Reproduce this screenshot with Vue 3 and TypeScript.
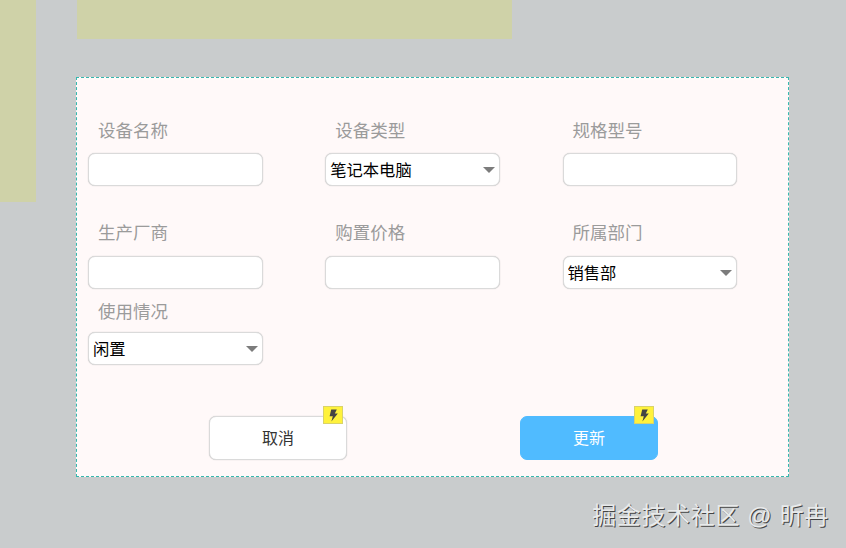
<script setup lang="ts">
import { reactive } from 'vue'

interface Field {
  key: string
  label: string
  options?: string[]
}

const fields: Field[] = [
  { key: 'name', label: '设备名称' },
  { key: 'type', label: '设备类型', options: ['笔记本电脑', '台式电脑', '平板电脑'] },
  { key: 'model', label: '规格型号' },
  { key: 'maker', label: '生产厂商' },
  { key: 'price', label: '购置价格' },
  { key: 'dept', label: '所属部门', options: ['销售部', '技术部', '财务部'] },
  { key: 'state', label: '使用情况', options: ['闲置', '在用', '维修'] },
]

const form = reactive<Record<string, string>>({
  name: '',
  type: '笔记本电脑',
  model: '',
  maker: '',
  price: '',
  dept: '销售部',
  state: '闲置',
})
</script>

<template>
  <div class="page">
    <div class="strip-left"></div>
    <div class="strip-top"></div>
    <form class="card" @submit.prevent>
      <div class="fields">
        <div v-for="f in fields" :key="f.key" class="field">
          <label class="field-label">{{ f.label }}</label>
          <div v-if="f.options" class="select-wrap">
            <select v-model="form[f.key]" class="control select">
              <option v-for="o in f.options" :key="o" :value="o">{{ o }}</option>
            </select>
            <span class="caret"></span>
          </div>
          <input v-else v-model="form[f.key]" class="control" type="text" />
        </div>
      </div>
      <div class="actions">
        <button type="button" class="btn btn-cancel">
          取消
          <span class="badge">
            <svg width="11" height="13" viewBox="0 0 11 13"><path d="M3.2 0.5H8.8L6.8 4.6H9.8L3.4 12.5 4.8 7.2H1.6Z" fill="#444" /></svg>
          </span>
        </button>
        <button type="button" class="btn btn-primary">
          更新
          <span class="badge">
            <svg width="11" height="13" viewBox="0 0 11 13"><path d="M3.2 0.5H8.8L6.8 4.6H9.8L3.4 12.5 4.8 7.2H1.6Z" fill="#444" /></svg>
          </span>
        </button>
      </div>
    </form>
    <div class="watermark">掘金技术社区 @ 昕冉</div>
  </div>
</template>

<style>
html,
body {
  margin: 0;
  background: #c9cccd;
}
</style>

<style scoped>
.page {
  display: grid;
  grid-template-columns: 36px 40px 713px 57px;
  grid-template-rows: 39px 38px 400px 71px;
  width: 846px;
  height: 548px;
  overflow: hidden;
  background: #c9cccd;
  font-family: "Liberation Sans", "Noto Sans CJK SC", sans-serif;
}
.strip-left {
  grid-column: 1;
  grid-row: 1 / 4;
  height: 202px;
  background: #cfd2a8;
}
.strip-top {
  grid-column: 2 / 4;
  grid-row: 1;
  width: 435px;
  margin-left: 41px;
  background: #cfd2a8;
}
.card {
  grid-column: 3;
  grid-row: 3;
  box-sizing: border-box;
  display: flex;
  flex-direction: column;
  padding: 42px 11px 0;
  background: #fff9f9;
  border: 1px dashed #35b8ae;
}
.fields {
  display: grid;
  grid-template-columns: repeat(3, 174.5px);
  grid-template-rows: 102px 79px 87px;
  column-gap: 62.75px;
}
.field {
  display: flex;
  flex-direction: column;
  align-items: flex-start;
}
.field-label {
  height: 22px;
  margin: 0 0 11px 10px;
  font-size: 17.5px;
  line-height: 22px;
  color: #9b9b9b;
}
.field:nth-child(n + 4) .field-label {
  margin-bottom: 12px;
}
.field:nth-child(n + 7) .field-label {
  margin-bottom: 9px;
}
.control {
  box-sizing: border-box;
  width: 174.5px;
  height: 33px;
  padding: 0 4px;
  background: #fff;
  border: 1px solid #dadada;
  border-radius: 7px;
  box-shadow: 0 0 1px #b8b8b8;
  outline: none;
  font-family: inherit;
  font-size: 16.3px;
  color: #000;
}
.select-wrap {
  position: relative;
  width: 174.5px;
  height: 33px;
}
.select {
  display: block;
  appearance: none;
}
.caret {
  position: absolute;
  top: 14px;
  right: 5px;
  width: 0;
  height: 0;
  border-left: 6px solid transparent;
  border-right: 6px solid transparent;
  border-top: 6px solid #7c7c7c;
  pointer-events: none;
}
.actions {
  display: flex;
  gap: 173px;
  margin-left: 121px;
  margin-top: 28px;
}
.btn {
  position: relative;
  box-sizing: border-box;
  width: 138px;
  height: 44px;
  padding: 0 0 3px;
  border-radius: 7px;
  font-family: inherit;
  font-size: 16px;
  cursor: pointer;
}
.btn-cancel {
  background: #fff;
  border: 1px solid #dadada;
  box-shadow: 0 0 1px #b8b8b8;
  color: #333;
}
.btn-primary {
  background: #50bbff;
  border: 1px solid #50bbff;
  color: #fff;
}
.badge {
  position: absolute;
  top: -11px;
  right: 3px;
  box-sizing: border-box;
  display: flex;
  align-items: center;
  justify-content: center;
  width: 20px;
  height: 18px;
  background: #fff23c;
  border: 1px solid #d9d36a;
}
.watermark {
  grid-column: 3 / 5;
  grid-row: 4;
  justify-self: end;
  margin: 22px 17px 0 0;
  font-size: 24px;
  line-height: 34px;
  letter-spacing: 0.65px;
  white-space: nowrap;
  color: #e8eaeb;
  text-shadow: 1px 1px 0 #444;
}
</style>
